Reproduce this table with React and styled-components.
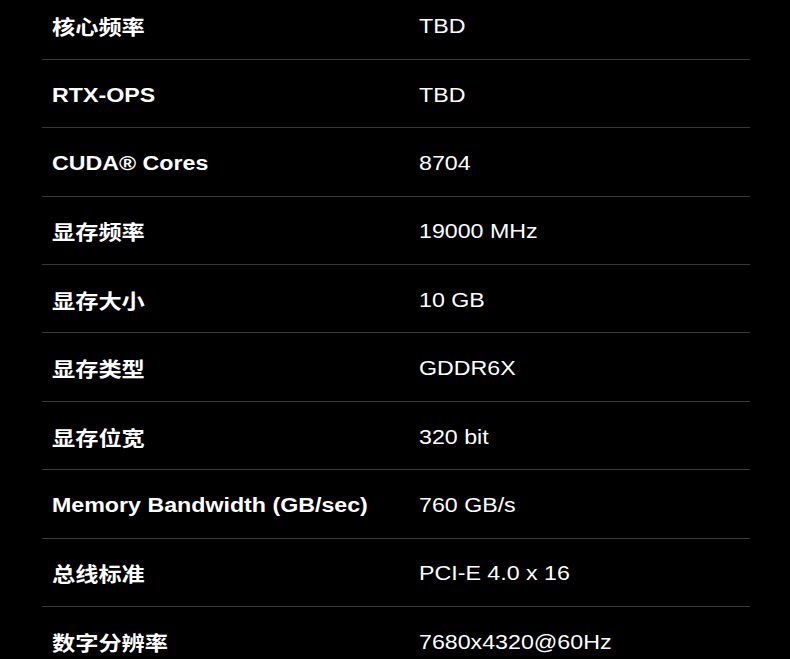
import React from 'react';
import styled, { createGlobalStyle } from 'styled-components';

const GlobalStyle = createGlobalStyle`
  html, body {
    margin: 0;
    padding: 0;
    background: #000;
  }
  body {
    font-family: "Liberation Sans", Arial, "Noto Sans CJK SC", sans-serif;
    color: #fff;
    overflow: hidden;
  }
`;

const SpecTable = styled.div`
  width: 708px;
  margin: -8.4px 0 0 42px;
  display: flex;
  flex-direction: column;
`;

const Row = styled.div`
  display: grid;
  grid-template-columns: 377px 1fr;
  align-items: center;
  height: 68.375px;
  padding-top: 3px;
  box-sizing: border-box;
  border-bottom: 1.5px solid #383838;
`;

/* source text is rendered horizontally widened */
const Cell = styled.div`
  font-size: 20px;
  white-space: nowrap;
  transform: scaleX(1.16);
  transform-origin: left center;
`;

const Label = styled(Cell)`
  margin-left: 10px;
  font-weight: bold;
`;

const Value = styled(Cell)`
  font-weight: normal;
`;

const specs = [
  ['核心频率', 'TBD'],
  ['RTX-OPS', 'TBD'],
  ['CUDA® Cores', '8704'],
  ['显存频率', '19000 MHz'],
  ['显存大小', '10 GB'],
  ['显存类型', 'GDDR6X'],
  ['显存位宽', '320 bit'],
  ['Memory Bandwidth (GB/sec)', '760 GB/s'],
  ['总线标准', 'PCI-E 4.0 x 16'],
  ['数字分辨率', '7680x4320@60Hz'],
];

function App() {
  return (
    <>
      <GlobalStyle />
      <SpecTable>
        {specs.map(([label, value]) => (
          <Row key={label}>
            <Label>{label}</Label>
            <Value>{value}</Value>
          </Row>
        ))}
      </SpecTable>
    </>
  );
}

export default App;
